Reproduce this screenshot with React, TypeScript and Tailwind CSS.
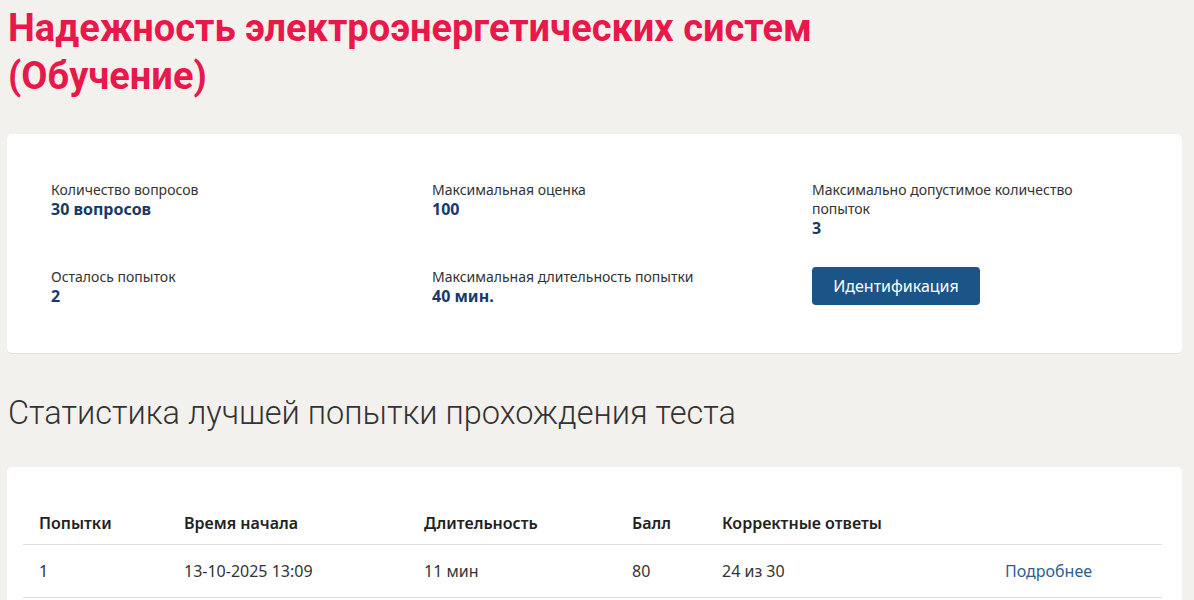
import React from "react";

const info = [
  { label: "Количество вопросов", value: "30 вопросов" },
  { label: "Максимальная оценка", value: "100" },
  { label: "Максимально допустимое количество попыток", value: "3" },
  { label: "Осталось попыток", value: "2" },
  { label: "Максимальная длительность попытки", value: "40 мин." },
];

const attempts = [
  { n: "1", start: "13-10-2025 13:09", duration: "11 мин", score: "80", correct: "24 из 30" },
];

export default function App() {
  return (
    <div className="min-h-screen bg-[#f3f1ee] pl-[7px] pr-[12px] pt-[4px] font-['Noto_Sans',sans-serif] text-[#333]">
      {/* page title */}
      <h1 className="pl-[1px] font-['Roboto',sans-serif] text-[38px] font-bold leading-[48px] text-[#e8194a]">
        Надежность электроэнергетических систем
        <br />
        (Обучение)
      </h1>

      {/* test info card */}
      <div className="mt-[34px] rounded-[5px] border-b border-[#e4e1dc] bg-white px-[44px] py-[46px]">
        <div className="grid grid-cols-[381px_380px_300px] gap-y-[28px]">
          {info.map((item) => (
            <div key={item.label}>
              <div className="text-[14px] leading-[19px]">{item.label}</div>
              <div className="text-[16px] font-bold leading-[21px] text-[#163a6a]">{item.value}</div>
            </div>
          ))}
          <div>
            <button className="h-[38px] w-[168px] rounded-[4px] bg-[#1b5487] text-[16px] text-white">
              Идентификация
            </button>
          </div>
        </div>
      </div>

      <h2 className="mt-[37px] pl-[1px] font-['Roboto',sans-serif] text-[32.5px] font-light leading-[44px] text-[#333]">
        Статистика лучшей попытки прохождения теста
      </h2>

      {/* best attempt table */}
      <div className="mt-[32px] rounded-[5px] bg-white px-[16px] pt-[35px] pb-[20px]">
        <table className="w-[1139px] table-fixed border-collapse text-left text-[16px]">
          <colgroup>
            <col className="w-[145px]" />
            <col className="w-[240px]" />
            <col className="w-[208px]" />
            <col className="w-[90px]" />
            <col className="w-[283px]" />
            <col />
          </colgroup>
          <thead>
            <tr className="border-b border-[#dedede]">
              <th className="h-[42px] pl-[16px] font-semibold text-[#222]">Попытки</th>
              <th className="pl-[16px] font-semibold text-[#222]">Время начала</th>
              <th className="pl-[16px] font-semibold text-[#222]">Длительность</th>
              <th className="pl-[16px] font-semibold text-[#222]">Балл</th>
              <th className="pl-[16px] font-semibold text-[#222]">Корректные ответы</th>
              <th />
            </tr>
          </thead>
          <tbody>
            {attempts.map((a) => (
              <tr key={a.n} className="border-b border-[#dedede]">
                <td className="h-[53px] pl-[16px]">{a.n}</td>
                <td className="pl-[16px]">{a.start}</td>
                <td className="pl-[16px]">{a.duration}</td>
                <td className="pl-[16px]">{a.score}</td>
                <td className="pl-[16px]">{a.correct}</td>
                <td className="pl-[16px]">
                  <a href="#" className="text-[#2b5f91]">Подробнее</a>
                </td>
              </tr>
            ))}
          </tbody>
        </table>
      </div>
    </div>
  );
}
